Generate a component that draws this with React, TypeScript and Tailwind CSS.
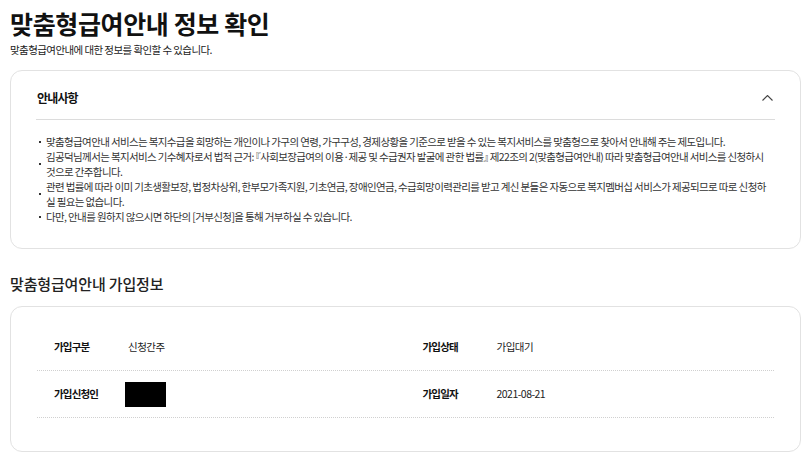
import React from 'react';

const notices: string[] = [
  '맞춤형급여안내 서비스는 복지수급을 희망하는 개인이나 가구의 연령, 가구구성, 경제상황을 기준으로 받을 수 있는 복지서비스를 맞춤형으로 찾아서 안내해 주는 제도입니다.',
  '김공덕님께서는 복지서비스 기수혜자로서 법적 근거: 『사회보장급여의 이용·제공 및 수급권자 발굴에 관한 법률』 제22조의 2(맞춤형급여안내) 따라 맞춤형급여안내 서비스를 신청하시 것으로 간주합니다.',
  '관련 법률에 따라 이미 기초생활보장, 법정차상위, 한부모가족지원, 기초연금, 장애인연금, 수급희망이력관리를 받고 계신 분들은 자동으로 복지멤버십 서비스가 제공되므로 따로 신청하실 필요는 없습니다.',
  '다만, 안내를 원하지 않으시면 하단의 [거부신청]을 통해 거부하실 수 있습니다.',
];

interface InfoCell {
  label: string;
  value?: string;
  masked?: boolean;
}

const rows: InfoCell[][] = [
  [
    { label: '가입구분', value: '신청간주' },
    { label: '가입상태', value: '가입대기' },
  ],
  [
    { label: '가입신청인', masked: true },
    { label: '가입일자', value: '2021-08-21' },
  ],
];

const Cell: React.FC<{ cell: InfoCell }> = ({ cell }) => (
  <div className="flex items-center pl-[17px]">
    <span className="w-[74px] text-[10.5px] font-bold tracking-[-0.08em] text-[#111]">
      {cell.label}
    </span>
    {cell.masked ? (
      <span className="-ml-[3px] block h-[25px] w-[41px] bg-black" />
    ) : (
      <span className="text-[10.5px] tracking-[-0.05em] text-[#222]">{cell.value}</span>
    )}
  </div>
);

export default function App() {
  return (
    <div className="min-h-screen bg-white px-[10px] font-['Noto_Sans_CJK_KR',sans-serif] text-[#222]">
      {/* Page header */}
      <h1 className="mt-[5px] text-[25px] font-bold leading-[36px] tracking-[-0.015em] text-[#111]">
        맞춤형급여안내 정보 확인
      </h1>
      <p className="mt-[2px] text-[10.5px] leading-[14px] tracking-[-0.055em] text-[#222]">
        맞춤형급여안내에 대한 정보를 확인할 수 있습니다.
      </p>

      {/* Notice card */}
      <div className="mt-[13px] rounded-[12px] border border-[#e2e2e2] px-[25px] pb-[24px]">
        <div className="flex items-center justify-between border-b border-[#dcdcdc] pt-[18px] pb-[13px]">
          <span className="pl-[1px] text-[12px] font-bold leading-[17px] tracking-[-0.07em] text-[#111]">
            안내사항
          </span>
          <svg width="11" height="6" viewBox="0 0 11 6" className="mr-[2px]" fill="none">
            <polyline points="0.5,5.5 5.5,0.5 10.5,5.5" stroke="#444" strokeWidth="1.1" />
          </svg>
        </div>
        <ul className="pt-[14px] pr-[4px]">
          {notices.map((text, i) => (
            <li key={i} className="flex items-center">
              <span className="ml-[3px] mr-[5px] h-[2px] w-[2px] shrink-0 bg-[#333]" />
              <span className="text-[10.5px] leading-[15px] tracking-[-0.06em] text-[#333] [font-feature-settings:'halt']">
                {text}
              </span>
            </li>
          ))}
        </ul>
      </div>

      {/* Membership info */}
      <h2 className="mt-[24px] text-[15px] font-medium leading-[22px] tracking-[-0.01em] text-[#222]">
        맞춤형급여안내 가입정보
      </h2>
      <div className="mt-[11px] rounded-[12px] border border-[#e2e2e2] px-[26px] pt-[17px] pb-[33px]">
        {rows.map((row, i) => (
          <div key={i} className="grid h-[47px] grid-cols-2 border-b border-dotted border-[#d0d0d0]">
            {row.map((cell) => (
              <Cell key={cell.label} cell={cell} />
            ))}
          </div>
        ))}
      </div>
    </div>
  );
}
